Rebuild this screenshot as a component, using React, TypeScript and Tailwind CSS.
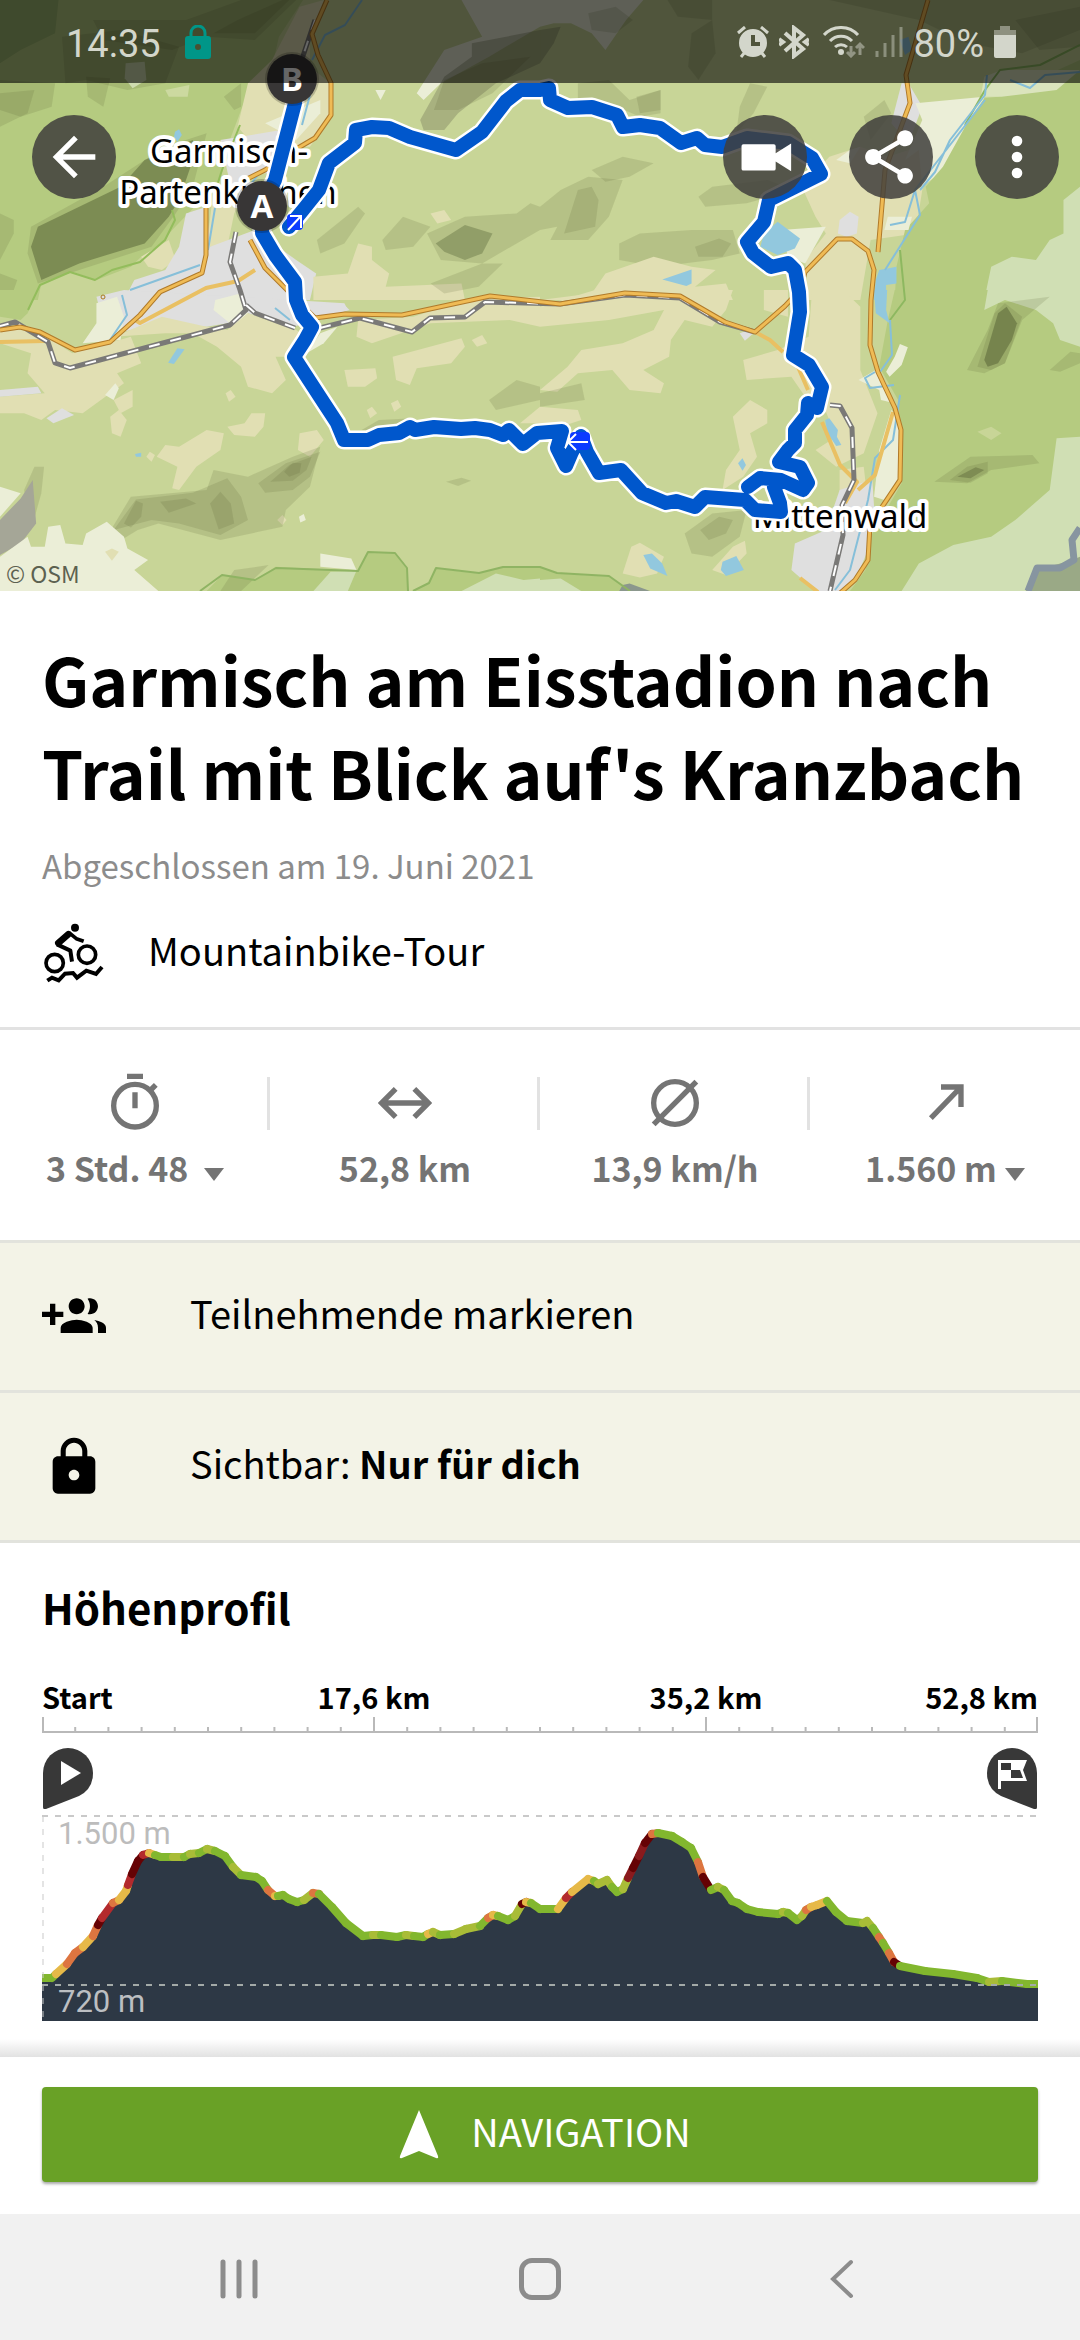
import React from "react";

const SANS = "font-['Noto_Sans_CJK_SC','Noto_Sans',sans-serif]";

type Shape = [fill: string, points: string];

const MEADOW = "#e1dfb3";
const FOREST = "#b5cb80";
const PALE = "#ebeed7";
const TOWN = "#dfdfdf";
const WATER = "#92c8de";
const SHADE = "rgba(84,96,52,0.16)";
const MOSS = "#d0dfb4";
const ROCK = "rgba(110,112,84,0.35)";

const NORTH_WEST: Shape[] = [
  [FOREST, "0,0 880,0 810,110 790,200 735,240 700,330 660,440 640,540 500,690 460,740 410,770 380,800 280,840 210,815 120,850 110,900 0,900"],
  ["#9fb970", "0,0 170,0 160,100 60,150 0,190"],
  [SHADE, "0,240 160,250 150,320 60,350 0,330"],
  [SHADE, "0,280 100,270 80,340 0,380"],
  [SHADE, "180,110 350,90 520,140 480,250 370,270 250,240 190,250"],
  [SHADE, "270,60 540,60 700,0 860,0 740,120 600,110 500,150 300,120"],
  [SHADE, "620,100 690,60 820,0 840,0 740,100"],
  [SHADE, "250,230 320,235 300,320 255,290"],
  [SHADE, "650,290 700,250 700,320 680,330"],
  ["rgba(84,96,52,0.5)", "110,680 350,560 420,480 560,420 560,480 520,600 490,650 420,730 230,790 120,840 90,740"],
  [SHADE, "90,680 300,560 480,440 600,400 560,560 510,640 440,740 230,810 110,850 80,760"],
  [SHADE, "0,640 40,660 40,700 0,780"],
  [SHADE, "0,820 50,840 30,900 0,900"],
  ["#cfdcb0", "365,190 420,185 425,240 385,265 362,235"],
  ["#ccd9a0", "480,270 550,255 545,290 490,290"],
  [MEADOW, "870,20 940,0 900,110 900,200 960,250 960,350 900,440 740,440 690,380 720,250 790,180"],
  [MEADOW, "410,770 490,720 510,780 470,810 430,800"],
  [MEADOW, "620,570 720,560 680,640 660,740 600,740"],
  [TOWN, "640,420 760,400 870,380 800,520 740,520 670,560"],
  [PALE, "770,370 930,300 930,340 860,420"],
  [TOWN, "540,640 600,620 610,740 740,690 860,780 918,820 900,900 360,900 390,840 480,810 520,740"],
  [MEADOW, "910,830 1010,820 1040,730 1080,740 1080,780 1130,820 1120,860 1340,850 1350,900 910,900"],
  [MEADOW, "1250,640 1290,630 1310,660 1270,670"],
  [PALE, "1090,270 1120,270 1105,300"],
  [PALE, "1210,280 1290,150 1400,110 1340,0 1568,0 1568,80 1420,170 1280,250 1230,300"],
  [ROCK, "1220,360 1290,230 1370,170 1370,130 1568,90 1568,190 1440,250 1330,340 1290,390 1230,390"],
  [SHADE, "1290,240 1400,190 1540,170 1430,280 1330,330 1260,330"],
  [SHADE, "920,720 1040,620 1060,640 1000,730 930,760"],
  [SHADE, "1110,720 1170,650 1250,680 1200,740 1120,750"],
  [SHADE, "1240,700 1350,650 1500,640 1540,610 1568,620 1568,690 1400,790 1280,780"],
  ["rgba(84,96,52,0.36)", "1265,730 1350,675 1430,700 1400,760 1350,780 1290,755"],
  [SHADE, "1250,850 1400,790 1460,790 1390,860 1290,880"],
  [WATER, "508,395 520,388 528,405 515,425 505,412"],
];

const NORTH_EAST: Shape[] = [
  [PALE, "0,0 300,0 250,60 190,150 150,100 90,70 40,70 0,80"],
  [ROCK, "0,90 60,80 40,130 0,190"],
  [SHADE, "140,40 220,20 270,60 220,100 150,90"],
  [SHADE, "370,0 500,0 500,60 400,50"],
  [SHADE, "440,100 500,60 510,160 460,240 430,200"],
  [SHADE, "110,250 200,240 260,300 350,270 350,340 290,350 200,310 110,300"],
  [SHADE, "280,290 350,270 350,330 290,340"],
  [SHADE, "580,320 610,250 660,260 620,340 570,400"],
  [SHADE, "840,0 1568,0 1568,90 1400,160 1240,130 1100,60"],
  [SHADE, "1380,60 1568,20 1568,140 1450,150"],
  [SHADE, "940,350 1000,300 1020,340 960,420"],
  [SHADE, "0,620 60,570 140,530 240,540 200,650 140,720 30,720 50,680 0,690"],
  [SHADE, "70,700 110,570 150,560 170,600 160,680"],
  [SHADE, "150,510 240,470 330,490 260,530 190,545"],
  [SHADE, "230,730 290,700 440,690 560,690 580,760 500,780 340,800 230,780"],
  [SHADE, "450,740 520,715 555,730 530,770 460,770"],
  [SHADE, "460,590 500,560 660,540 740,570 600,610 480,620"],
  [MEADOW, "760,560 840,470 930,440 1010,470 1130,430 1150,460 1110,570 1090,700 960,720 930,900 780,900 770,780 830,700 800,650"],
  [MEADOW, "0,900 150,880 190,820 330,770 440,800 510,810 450,860 540,850 560,900"],
  [TOWN, "1050,250 1070,250 1110,320 1070,430 1020,370"],
  [PALE, "1090,310 1290,290 1280,350 1160,520 1110,560 1100,450 1060,480 1110,360"],
  [PALE, "860,480 900,450 930,440 900,490"],
  [TOWN, "870,660 900,635 925,650 920,700 890,710 865,700"],
  [PALE, "700,690 830,680 770,790 720,770"],
  [FOREST, "1568,180 1568,900 1030,900 1035,800 1060,690 1130,610 1120,560 1170,500 1240,370 1290,295 1330,290"],
  [MOSS, "1568,560 1520,600 1520,700 1480,720 1440,780 1370,770 1310,800 1290,900 1568,900"],
  [PALE, "1010,650 1080,650 1070,690 1000,690"],
  ["#dbe4bd", "1290,230 1340,210 1568,210 1500,270 1340,290 1280,290"],
  [WATER, "690,665 755,715 740,745 690,765 640,740 650,700"],
  [WATER, "355,838 440,808 440,850 425,858"],
  [WATER, "1045,120 1070,110 1080,150 1060,165"],
  [WATER, "985,810 1035,800 1035,850 1005,855 1005,900 970,900 975,840"],
];

const SOUTH_WEST: Shape[] = [
  [TOWN, "280,20 360,0 1000,40 1010,60 930,90 850,110 720,70 660,100 600,110 480,100 420,110 340,130 290,60"],
  [FOREST, "0,0 110,0 80,70 60,90 0,80"],
  [PALE, "280,40 340,20 360,80 350,150 240,160 280,100"],
  [PALE, "625,30 700,10 720,70 680,110 620,60"],
  [MEADOW, "0,110 120,130 210,190 380,140 410,220 340,250 360,280 240,370 160,360 120,390 70,370 0,370 0,320 130,310 80,250 90,190 0,160"],
  [MEADOW, "330,140 470,80 600,110 660,120 720,70 860,120 890,140 850,200 800,200 830,270 790,310 720,290 700,230 630,170 560,130 480,130"],
  [TOWN, "0,300 110,290 120,310 0,320"],
  [TOWN, "135,385 180,355 215,375 155,400"],
  [TOWN, "930,40 1000,45 1015,60 940,80"],
  [PALE, "930,130 980,110 940,160 890,190"],
  [PALE, "305,315 335,280 345,295 330,330"],
  [MEADOW, "330,330 385,300 385,350 350,370"],
  [MEADOW, "320,380 345,360 368,390 350,440 325,430"],
  [MEADOW, "655,310 670,300 684,320 665,335"],
  [MEADOW, "660,410 710,400 730,370 770,370 765,410 740,440 680,435"],
  [MEADOW, "455,500 480,465 520,470 600,420 650,430 640,480 570,530 520,600 500,595 515,530"],
  [MEADOW, "425,500 435,485 450,495 440,515"],
  [MEADOW, "870,430 920,420 940,450 900,500 865,480"],
  [MEADOW, "1140,200 1340,145 1350,170 1310,220 1210,235 1190,285 1150,270"],
  [MEADOW, "1000,240 1090,235 1095,265 1060,290 1010,290"],
  [MEADOW, "1040,90 1200,80 1350,30 1568,20 1568,110 1480,90 1250,100 1080,160 1035,140"],
  [MEADOW, "1370,150 1400,135 1415,160 1385,170"],
  [MEADOW, "1065,360 1080,350 1095,370 1075,385"],
  [MEADOW, "1135,340 1155,330 1165,350 1145,365"],
  [MEADOW, "1510,400 1568,350 1568,400"],
  [MEADOW, "805,690 820,675 832,690 820,705"],
  [PALE, "868,680 882,672 888,690 872,697"],
  [SHADE, "1420,330 1500,270 1568,290 1568,330 1440,360"],
  [SHADE, "1050,420 1100,390 1200,385 1150,420"],
  [SHADE, "1295,575 1340,563 1368,572 1330,588"],
  [SHADE, "310,740 380,620 600,600 620,540 720,560 850,500 930,470 900,590 830,660 820,710 640,750 460,700 400,720 320,770"],
  [SHADE, "330,720 395,628 560,608 660,565 700,620 720,690 640,735 520,700 440,690"],
  [SHADE, "360,700 395,632 415,640 410,680 380,712"],
  [SHADE, "465,635 540,625 570,640 490,668"],
  [SHADE, "610,640 640,605 670,640 680,700 635,718"],
  [SHADE, "750,580 830,520 930,485 900,560 850,600 770,608"],
  [SHADE, "785,575 840,525 905,500 890,540 850,572"],
  [SHADE, "825,545 850,518 875,520 870,548 840,560"],
  [SHADE, "70,600 100,530 128,530 120,610 90,720"],
  [PALE, "0,590 60,610 0,680"],
  ["#a5a697", "0,690 60,625 95,570 105,700 60,760 0,795"],
  [PALE, "0,800 80,740 90,770 130,770 140,710 175,705 190,760 240,765 250,730 310,695 360,740 370,775 430,810 390,840 460,903 0,903"],
  [MEADOW, "305,785 325,775 345,785 325,812"],
  [FOREST, "600,903 645,855 740,870 800,830 1040,842 1070,785 1145,788 1180,835 1185,903"],
  [FOREST, "1200,903 1245,880 1265,835 1390,850 1460,830 1568,830 1568,903"],
  [SHADE, "640,903 680,840 780,825 700,903"],
  [MOSS, "910,903 960,845 1035,842 1010,903"],
  [MOSS, "1340,903 1440,850 1520,870 1568,865 1568,903"],
  [PALE, "930,790 1020,805 1035,840 930,830"],
  [WATER, "488,218 515,175 536,178 505,222"],
  [WATER, "392,492 410,488 410,500 395,500"],
];

const SOUTH_EAST: Shape[] = [
  [MEADOW, "0,50 160,0 560,0 540,60 500,110 420,90 380,150 375,200 300,240 360,280 350,310 260,300 210,240 110,250 50,305 0,300 80,230 120,180 240,160 330,120 360,60 200,90 0,110"],
  [MEADOW, "650,0 720,0 720,80 650,60"],
  [MEADOW, "790,0 880,0 930,50 930,240 980,370 940,490 860,530 800,480 860,440 820,340 770,320 730,260 600,270 590,210 690,180 780,140"],
  [MEADOW, "560,380 610,330 660,360 660,400 610,430 630,500 590,560 530,600 540,540 580,480"],
  [MEADOW, "0,350 110,360 120,390 60,410 0,400"],
  [MEADOW, "240,850 265,770 290,758 360,800 340,850 290,862"],
  [MEADOW, "500,840 560,770 595,752 600,790 540,855"],
  [MEADOW, "870,540 940,530 950,620 870,640"],
  [TOWN, "580,130 600,122 620,130 595,152"],
  [TOWN, "870,600 930,580 965,570 970,650 960,760 920,860 870,903 800,903 730,840 740,760 830,720"],
  [PALE, "985,480 1020,360 1045,390 1045,580 1000,630 970,620"],
  [PALE, "925,270 975,240 1000,270 1030,340 990,330 985,300"],
  [FOREST, "1568,0 1030,0 1010,90 985,230 1040,330 1050,580 960,740 945,840 900,903 1568,903"],
  [MOSS, "1300,0 1568,0 1568,170 1510,150 1490,100 1440,60 1350,30 1290,60"],
  [MOSS, "1568,440 1500,445 1480,600 1380,690 1310,740 1200,765 1100,820 1050,903 1568,903"],
  ["#9aa986", "1568,800 1540,812 1440,840 1410,903 1568,903"],
  [PALE, "1030,200 1045,162 1068,172 1050,225 1015,260 1005,245"],
  [SHADE, "1240,240 1300,120 1330,40 1480,20 1400,90 1350,220 1290,250"],
  ["rgba(84,96,52,0.5)", "1290,210 1330,70 1355,50 1385,100 1370,150 1330,220 1300,230"],
  [SHADE, "1270,230 1320,70 1350,40 1400,80 1350,220 1310,240"],
  [SHADE, "1480,240 1540,185 1568,190 1568,220 1510,245"],
  [SHADE, "1145,575 1250,500 1430,495 1450,520 1310,540 1240,580"],
  [SHADE, "1190,570 1240,530 1300,515 1300,550 1250,578"],
  ["rgba(84,96,52,0.4)", "1212,560 1265,532 1290,540 1250,565"],
  ["#c8d597", "1270,425 1310,410 1340,430 1310,450"],
  [SHADE, "420,730 500,670 600,660 580,740 500,800 440,790"],
  [SHADE, "465,720 520,680 560,690 540,730 490,750"],
  [SHADE, "0,310 120,280 130,330 0,350"],
  [FOREST, "0,830 50,850 200,860 260,903 0,903"],
  [MOSS, "0,870 60,865 120,903 0,903"],
  ["#8b978d", "230,903 240,885 260,880 320,903"],
  [WATER, "970,0 1008,0 1005,60 1015,100 975,70"],
  [WATER, "300,795 325,790 355,820 370,858 320,835"],
  [WATER, "530,815 570,798 592,840 540,858 525,840"],
  [WATER, "575,520 588,505 598,525 588,542"],
  [WATER, "828,390 840,385 865,420 862,440 875,465 860,468 835,430"],
];

const TILES: { at: string; shapes: Shape[] }[] = [
  { at: "translate(0 0)", shapes: NORTH_WEST },
  { at: "translate(540 0)", shapes: NORTH_EAST },
  { at: "translate(0 290)", shapes: SOUTH_WEST },
  { at: "translate(540 290)", shapes: SOUTH_EAST },
];

const ROADS = [
  "M327 0 312 34 318 55 331 83 331 115 315 138 298 148 265 170 245 180",
  "M206 208V255L202 273 160 292 140 315 110 342 75 350 40 332 20 327 0 330",
  "M250 240 265 268 285 288 315 318 345 314 402 315 490 296 560 304 625 293 680 296 725 322 755 332 785 306 800 290 805 272 837 239 852 239 868 251 874 270 871 300 870 345 878 372 895 408 901 430 900 480 870 525 868 560 855 580 838 595",
  "M928 0 906 75 910 103 885 170 878 252",
];
const TRACKS = "M0 342 45 341M135 320 140 323 206 288 238 281 255 270M755 332 770 340 783 352M795 360 808 390M822 422 840 465 857 482 845 503M893 412 875 475 858 490M800 578 818 592";
const RAILWAY = "M315 20 300 65M236 232 230 262 240 290 246 310 230 325 70 368 55 363 48 342 15 322 0 326M246 305 255 313 295 328M320 328 360 318 412 332 430 318 465 317 485 302 560 304 625 295 680 298 720 322 755 332M830 405 840 406 852 428 854 480 842 505 843 535 830 591";
const STREAMS = "M362 0 345 25 325 35 312 60M310 95 302 125M215 208 208 250M200 265 130 290M122 295 127 315 110 340M262 170 250 185M987 75 985 95 950 140 935 172 920 190M985 100 950 145 915 190 905 222 890 225M915 190 920 215 885 270M894 385 870 388 865 378 875 372M900 395 893 440 875 458 868 500 850 570 835 590M890 320 892 355 880 372M1010 80 1030 88 1045 75 1080 72M275 308 290 320";

const ROUTE =
  "M292 79 295 103 275 180 262 206 262 233 275 255 295 282 296 300 302 315 312 327 305 340 294 357 320 397 337 423 344 440 368 440 379 435 399 433 410 427 415 430 434 427 461 429 475 428 490 430 503 435 509 430 523 444 537 433 562 431 557 448 566 466 572 452 581 436 587 452 599 473 621 470 642 493 666 503 676 501 695 507 705 497 745 500 755 510 781 512 780 503 774 487 781 482M748 487 760 478 781 480 803 490 808 483 800 467 779 462 788 450 795 443 795 430 807 415 808 403 817 408 822 387 809 365 793 355 800 312 799 292 795 270 788 263 771 267 753 253 747 242 764 222 769 200 795 187 821 174 812 158 788 143 764 140 747 138 722 147 705 145 697 138 681 143 660 128 640 125 623 127 617 115 592 107 568 108 550 100 549 88 540 90 520 90 506 101 482 132 456 150 410 137 389 128 372 127 356 130 355 143 329 163 319 190 303 210 289 227";

function PlaceLabel({ x, y, children }: { x: number; y: number; children: string }) {
  return (
    <text
      x={x}
      y={y}
      textAnchor="middle"
      className="fill-black stroke-white font-['Noto_Sans',sans-serif] text-[33px] [paint-order:stroke]"
      strokeWidth="8"
      strokeLinejoin="round"
    >
      {children}
    </text>
  );
}

function Waypoint({ x, y, children }: { x: number; y: number; children: string }) {
  return (
    <g>
      <circle cx={x} cy={y} r="27" fill="rgba(0,0,0,0.2)" />
      <circle cx={x} cy={y} r="25" fill="#383636" />
      <text x={x} y={y + 12} textAnchor="middle" className="fill-white font-['Noto_Sans',sans-serif] text-[33px] font-bold">
        {children}
      </text>
    </g>
  );
}

function TourMap() {
  return (
    <svg className="absolute inset-0 size-full" viewBox="0 0 1080 591" preserveAspectRatio="xMidYMin slice" role="img" aria-label="Karte der Tour">
      <rect width="1080" height="591" fill="#c8d597" />
      {TILES.map((tile) => (
        <g key={tile.at} transform={tile.at}>
          <g transform="scale(0.3444 0.3334)">
            {tile.shapes.map(([fill, points], i) => (
              <polygon key={i} points={points} fill={fill} />
            ))}
          </g>
        </g>
      ))}
      <g fill="none" strokeLinejoin="round">
        <path d="M240 125 222 170 214 195 M172 210 175 220 165 240 140 262 112 270 95 280 70 272 40 285 28 310" stroke="#93bd5c" strokeWidth="2" />
        <path d="M200 591 222 575 255 580 276 568 358 571 368 552 395 553 407 568 408 591 M413 591 429 583 436 568 479 573 503 567 540 567 557 573 609 576 630 591" stroke="#8fb463" strokeWidth="2" />
        <path d="M1080 45 1040 65 1000 70 985 90 965 125M890 320 905 300 900 250" stroke="#8db860" strokeWidth="2" />
        <path d="M1080 528 1072 540 1074 560 1060 568 1037 568 1028 591" stroke="#8795a0" strokeWidth="7" />
        <path d={STREAMS} stroke="#86bfd9" strokeWidth="2" />
        <path d={TRACKS} stroke="#e9c063" strokeWidth="4" />
        <path d={RAILWAY} stroke="#7a7977" strokeWidth="5" />
        <path d={RAILWAY} stroke="#fff" strokeWidth="2" strokeDasharray="11 11" />
        {ROADS.map((d) => (
          <g key={d}>
            <path d={d} stroke="#b07a2a" strokeWidth="5" />
            <path d={d} stroke="#efbb55" strokeWidth="3" />
          </g>
        ))}
        <circle cx="103" cy="297" r="2" stroke="#a8781f" />
      </g>
      <PlaceLabel x={229} y={163}>Garmisch-</PlaceLabel>
      <PlaceLabel x={228} y={204}>Partenkirchen</PlaceLabel>
      <PlaceLabel x={840} y={528}>Mittenwald</PlaceLabel>
      <g fill="none" strokeLinejoin="round" strokeLinecap="round">
        <path d={ROUTE} stroke="#fff" strokeWidth="19" />
        <path d={ROUTE} stroke="#0057cc" strokeWidth="14" />
      </g>
      <g fill="none" stroke="#fff" strokeWidth="2">
        <rect x="287" y="214" width="16" height="16" rx="4" fill="#0b3bff" stroke="none" />
        <path d="M288 230 301 216M290 216H301V228" />
        <rect x="570" y="432" width="20" height="18" rx="4" fill="#0b3bff" stroke="none" />
        <path d="M588 442H568M576 434 568 442 576 450" />
      </g>
      <Waypoint x={292} y={79}>B</Waypoint>
      <Waypoint x={262} y={206}>A</Waypoint>
    </svg>
  );
}

function StatusBar() {
  return (
    <div className="relative flex h-[83px] items-center justify-between bg-black/60 pr-16 pl-[66px] font-[Roboto,sans-serif] text-[#d3d6cb]">
      <div className="flex items-center gap-6">
        <span className="pt-1 text-[38px] leading-[48px]">14:35</span>
        <svg className="h-[34px] w-[26px]" viewBox="0 0 26 34" aria-hidden="true">
          <path d="M6 13V8a7 7 0 0 1 14 0v5" fill="none" stroke="#009688" strokeWidth="3" />
          <path fillRule="evenodd" fill="#009688" d="M3 11H23a3 3 0 0 1 3 3V31a3 3 0 0 1-3 3H3a3 3 0 0 1-3-3V14a3 3 0 0 1 3-3ZM13 19a3 3 0 1 0 0 6 3 3 0 0 0 0-6Z" />
        </svg>
      </div>
      <div className="flex items-center gap-[10px]">
        <svg className="h-8 w-8" viewBox="0 0 32 32" aria-hidden="true">
          <path fillRule="evenodd" fill="currentColor" d="M16 3a14 14 0 1 1 0 28 14 14 0 0 1 0-28ZM14 9V20H23V16H18V9Z" />
          <path d="M1 7 8 1M31 7 24 1M4 31 8 26M28 31 24 26" stroke="currentColor" strokeWidth="3" />
        </svg>
        <svg className="h-[34px] w-[30px]" viewBox="0 0 30 34" fill="none" stroke="currentColor" strokeWidth="4" aria-hidden="true">
          <path d="M6 8 24 24 15 31V3L24 10 6 26M0 14 4 17 0 20M30 14 26 17 30 20" />
        </svg>
        <svg className="ml-1 h-8 w-[42px]" viewBox="0 0 42 32" fill="none" stroke="currentColor" strokeWidth="3" aria-hidden="true">
          <path d="M1 9a23 23 0 0 1 34 0M7 15a15 15 0 0 1 22 0M12 21a9 9 0 0 1 12 0" />
          <circle cx="18" cy="26" r="3" fill="currentColor" stroke="none" />
          <path opacity="0.5" d="M28 20V30M24 26 28 30 32 26M37 29V18M33 22 37 18 41 22" />
        </svg>
        <svg className="h-[30px] w-7" viewBox="0 0 28 30" stroke="currentColor" strokeWidth="3" opacity="0.45" aria-hidden="true">
          <path d="M2 24V30M10 16V30M18 8V30M26 0V30" />
        </svg>
        <span className="pt-1 text-[38px] leading-[48px]">80%</span>
        <svg className="h-8 w-[22px]" viewBox="0 0 22 32" aria-hidden="true">
          <path fill="currentColor" opacity="0.5" d="M6 0H16V4H22V9H0V4H6Z" />
          <path fill="currentColor" d="M0 9H22V30a2 2 0 0 1-2 2H2a2 2 0 0 1-2-2Z" />
        </svg>
      </div>
    </div>
  );
}

function MapButton({ label, children }: { label: string; children: React.ReactNode }) {
  return (
    <button type="button" aria-label={label} className="flex size-[84px] items-center justify-center rounded-full bg-[#403e3c]/85 text-white">
      <svg className="size-16" viewBox="0 0 24 24" fill="currentColor" aria-hidden="true">
        {children}
      </svg>
    </button>
  );
}

function MapHeader() {
  return (
    <header className="relative h-[591px] overflow-hidden">
      <TourMap />
      <StatusBar />
      <div className="relative mt-8 flex justify-between pr-[21px] pl-8">
        <MapButton label="Zurück">
          <path d="M20 11H7.83l5.59-5.59L12 4l-8 8 8 8 1.41-1.41L7.83 13H20v-2z" />
        </MapButton>
        <div className="flex gap-[42px]">
          <MapButton label="Video">
            <path d="M3.900 7.200H15.300q.7 0 .7.7v2.700L21.800 6.900v10.400l-5.800-3.600v2.700q0 .7-.7.7H3.900q-.7 0-.7-.7V7.900q0-.7.7-.7z" />
          </MapButton>
          <MapButton label="Teilen">
            <path transform="translate(-0.7 0)" d="M18 16.080c-.76 0-1.440.3-1.960.77L8.910 12.700c.05-.23.090-.46.090-.7s-.04-.47-.09-.7l7.050-4.110c.54.5 1.250.81 2.040.81 1.660 0 3-1.340 3-3s-1.340-3-3-3-3 1.340-3 3c0 .24.040.47.090.7L8.040 9.810C7.500 9.310 6.790 9 6 9c-1.660 0-3 1.340-3 3s1.340 3 3 3c.79 0 1.500-.31 2.040-.81l7.120 4.160c-.05.21-.08.43-.08.65 0 1.610 1.310 2.920 2.920 2.920s2.920-1.310 2.920-2.920-1.310-2.920-2.920-2.920z" />
          </MapButton>
          <MapButton label="Mehr">
            <circle cx="12" cy="6" r="2" />
            <circle cx="12" cy="12" r="2" />
            <circle cx="12" cy="18" r="2" />
          </MapButton>
        </div>
      </div>
      <a href="#osm" className={`absolute bottom-1 left-[6px] text-[23px] leading-[28px] text-[#5c6150] ${SANS}`}>
        © OSM
      </a>
    </header>
  );
}

function MountainBikeIcon() {
  return (
    <svg className="size-16" viewBox="18 24 192 192" fill="none" stroke="#000" aria-hidden="true">
      <circle cx="117" cy="41" r="12" fill="#000" stroke="none" />
      <circle cx="56" cy="147" r="26" strokeWidth="11" />
      <circle cx="153" cy="122" r="26" strokeWidth="11" />
      <path d="M97 61 67 87" strokeWidth="20" strokeLinecap="round" />
      <path d="M99 56 121 74 143 82" strokeWidth="11" strokeLinejoin="round" />
      <path d="M63 91 103 110 108 143" strokeWidth="12" strokeLinejoin="round" />
      <path d="M34 200 48 191 68 199 87 179 111 177 123 191 151 170 180 180 198 159" strokeWidth="12" />
    </svg>
  );
}

function Stat({ icon, label, value, menu = false, divided = true }: { icon: React.ReactNode; label: string; value: string; menu?: boolean; divided?: boolean }) {
  const row = "mt-[9px] flex items-center justify-center gap-2 whitespace-pre text-[34px] leading-[48px] font-bold";
  return (
    <li className="relative flex flex-col items-center">
      <svg className="size-16" viewBox="0 0 24 24" fill="none" stroke="currentColor" strokeWidth="2" role="img" aria-label={label}>
        {icon}
      </svg>
      {menu ? (
        <button type="button" className={row}>
          {value}
          <svg className="mt-3 h-[13px] w-5" viewBox="0 0 20 13" fill="currentColor" aria-hidden="true">
            <path d="M0 0H20L10 13Z" />
          </svg>
        </button>
      ) : (
        <span className={row}>{value}</span>
      )}
      {divided && <span className="absolute top-[6px] right-0 h-[53px] w-[3px] bg-[#e2e2e2]" />}
    </li>
  );
}

function OptionRow({ icon, children }: { icon: string; children: React.ReactNode }) {
  return (
    <button type="button" className="flex h-[150px] w-full items-center gap-[84px] border-b-[3px] border-[#e2e3dd] bg-[#f3f3e7] px-[42px] text-left text-[38px] leading-[54px]">
      <svg className="size-16" viewBox="0 0 24 24" aria-hidden="true">
        <path d={icon} />
      </svg>
      <span className="pb-2">{children}</span>
    </button>
  );
}

const GREEN = "#82b72e";
const LIME = "#a9bc37";
const YELLOW = "#e6b948";
const ORANGE = "#dd7540";
const RED = "#b32a2d";
const WINE = "#8a1a1d";
const MAROON = "#650204";

/* Elevation samples: x, y and the slope colour of the stretch that follows. */
const PROFILE: [number, number, string][] = [
  [0, 163, GREEN], [10, 163, GREEN], [14, 159, YELLOW], [25, 149, ORANGE], [33, 138, ORANGE], [41, 132, YELLOW], [51, 121, ORANGE],
  [56, 110, MAROON], [60, 103, RED], [71, 88, ORANGE], [77, 85, YELLOW], [84, 76, YELLOW], [86, 70, RED], [90, 59, MAROON],
  [96, 46, MAROON], [101, 40, RED], [107, 38, YELLOW], [113, 40, GREEN], [119, 42, GREEN], [131, 42, LIME], [142, 42, GREEN],
  [148, 39, LIME], [157, 38, GREEN], [165, 34, LIME], [173, 36, GREEN], [183, 41, GREEN], [191, 52, LIME], [199, 60, GREEN],
  [214, 62, GREEN], [220, 66, GREEN], [226, 75, ORANGE], [233, 81, YELLOW], [236, 81, GREEN], [241, 80, GREEN], [247, 84, GREEN],
  [255, 87, GREEN], [262, 85, LIME], [271, 78, ORANGE], [277, 79, GREEN], [290, 92, GREEN], [304, 108, GREEN], [321, 121, GREEN],
  [331, 120, LIME], [339, 120, GREEN], [355, 122, GREEN], [364, 120, LIME], [372, 121, GREEN], [381, 122, GREEN], [386, 119, YELLOW],
  [391, 117, LIME], [398, 120, GREEN], [412, 119, LIME], [424, 114, LIME], [438, 111, GREEN], [446, 103, ORANGE], [451, 100, YELLOW],
  [456, 101, GREEN], [466, 105, GREEN], [473, 101, LIME], [480, 89, MAROON], [484, 87, YELLOW], [489, 88, GREEN], [498, 94, GREEN],
  [516, 94, YELLOW], [524, 83, RED], [530, 77, YELLOW], [546, 64, YELLOW], [552, 66, GREEN], [556, 69, LIME], [565, 65, LIME],
  [570, 72, GREEN], [575, 77, GREEN], [581, 74, LIME], [586, 63, WINE], [591, 53, MAROON], [597, 41, WINE], [603, 28, MAROON],
  [610, 19, ORANGE], [616, 18, GREEN], [630, 21, GREEN], [640, 27, GREEN], [649, 33, GREEN], [656, 47, ORANGE], [661, 62, MAROON],
  [669, 75, GREEN], [676, 72, LIME], [682, 75, GREEN], [690, 86, GREEN], [696, 88, GREEN], [705, 94, GREEN], [716, 97, GREEN],
  [736, 99, GREEN], [741, 97, LIME], [746, 98, GREEN], [755, 105, GREEN], [760, 101, LIME], [764, 95, ORANGE], [769, 92, YELLOW],
  [775, 90, YELLOW], [785, 86, GREEN], [794, 97, GREEN], [805, 106, GREEN], [821, 108, LIME], [825, 106, LIME], [831, 113, GREEN],
  [837, 122, ORANGE], [841, 128, GREEN], [847, 138, ORANGE], [852, 147, MAROON], [858, 151, GREEN], [883, 156, GREEN], [911, 159, GREEN],
  [935, 163, GREEN], [947, 167, LIME], [960, 166, GREEN], [985, 169, GREEN], [996, 169, GREEN],
];

function ElevationChart() {
  const outline = "M" + PROFILE.map(([x, y]) => `${x} ${y}`).join("L") + "V206H0Z";
  return (
    <div className="relative">
      <svg className="block h-[206px] w-full" viewBox="0 0 996 206" preserveAspectRatio="none" role="img" aria-label="Höhenprofil der Tour">
        <path d={outline} fill="#2d3845" />
        {PROFILE.slice(0, -1).map(([x, y, color], i) => {
          const [nx, ny] = PROFILE[i + 1];
          return <line key={x} x1={x} y1={y} x2={nx} y2={ny} stroke={color} strokeWidth="8" strokeLinecap={i === 0 ? "butt" : "round"} />;
        })}
        <path d="M0 1H996" stroke="#c9c9c9" strokeWidth="2" strokeDasharray="6 7" />
        <path d="M1 1V206" stroke="#c9c9c9" strokeDasharray="6 7" />
        <path d="M0 170H996" stroke="#a3aaa8" strokeWidth="2" strokeDasharray="6 7" />
      </svg>
      <span className="absolute top-0 left-4 font-[Roboto,sans-serif] text-[31px] leading-[38px] text-[#bcbcbc]">1.500 m</span>
      <span className="absolute bottom-0 left-4 font-[Roboto,sans-serif] text-[31px] leading-[38px] text-[#bcbfc2]">720 m</span>
    </div>
  );
}

function AxisRuler() {
  return (
    <svg className="block h-4 w-full" viewBox="0 0 996 16" preserveAspectRatio="none" stroke="#b9b9b9" strokeWidth="2" aria-hidden="true">
      <path d="M0 15H996" />
      {Array.from({ length: 31 }, (_, i) => {
        const x = Math.min(Math.max(i * 33.2, 1), 995);
        return <line key={i} x1={x} x2={x} y1={i % 10 === 0 ? 0 : 10} y2="15" />;
      })}
    </svg>
  );
}

export default function App() {
  return (
    <div className={`flex min-h-screen flex-col bg-white text-black ${SANS}`}>
      <MapHeader />

      <main className="grow">
        <section className="border-b-[3px] border-[#e2e2e2] px-[42px] pt-[41px] pb-[41px]">
          <h1 className="text-[66px] leading-[93px] font-bold">Garmisch am Eisstadion nach Trail mit Blick auf's Kranzbach</h1>
          <p className="mt-[23px] text-[33px] leading-[48px] text-[#8c8c8c]">Abgeschlossen am 19. Juni 2021</p>
          <div className="mt-[33px] flex items-center gap-[42px]">
            <MountainBikeIcon />
            <span className="pb-2 text-[38px] leading-[54px]">Mountainbike-Tour</span>
          </div>
        </section>

        <ul className="grid grid-cols-4 border-b-[3px] border-[#e2e3dd] pt-[41px] pb-12 text-[#747474]">
          <Stat
            label="Dauer"
            value="3 Std. 48 "
            menu
            icon={
              <>
                <circle cx="12" cy="13" r="8" />
                <path d="M9 2H15M12 8V14M17.500 7.500 19.800 5.200" />
              </>
            }
          />
          <Stat label="Strecke" value="52,8 km" icon={<path d="M3.500 12H20.500M8.500 6.700 3.200 12 8.500 17.300M15.500 6.700 20.800 12 15.500 17.300" />} />
          <Stat
            label="Durchschnitt"
            value="13,9 km/h"
            icon={
              <>
                <circle cx="12" cy="12" r="8" />
                <path d="M4 20 20 4" />
              </>
            }
          />
          <Stat label="Bergauf" value="1.560 m" menu divided={false} icon={<path d="M6.700 17.700 18 6M10.500 6H18V13.500" />} />
        </ul>

        <OptionRow icon="M8 10H5V7H3v3H0v2h3v3h2v-3h3v-2zm10 1c1.660 0 2.990-1.340 2.990-3S19.660 5 18 5c-.32 0-.63.050-.91.140.57.810.9 1.790.9 2.860s-.34 2.040-.9 2.860c.28.090.59.140.91.140zm-5 0c1.660 0 2.990-1.340 2.990-3S14.660 5 13 5c-1.660 0-3 1.340-3 3s1.340 3 3 3zm6.620 2.160c.83.73 1.380 1.660 1.380 2.840v2h3v-2c0-1.540-2.370-2.490-4.380-2.840zM13 13c-2 0-6 1-6 3v2h12v-2c0-2-4-3-6-3z">
          Teilnehmende markieren
        </OptionRow>
        <OptionRow icon="M18 8h-1V6c0-2.760-2.240-5-5-5S7 3.240 7 6v2H6c-1.100 0-2 .9-2 2v10c0 1.100.9 2 2 2h12c1.100 0 2-.9 2-2V10c0-1.100-.9-2-2-2zm-6 9c-1.100 0-2-.9-2-2s.9-2 2-2 2 .9 2 2-.9 2-2 2zm3.100-9H8.900V6c0-1.710 1.390-3.100 3.100-3.100s3.100 1.390 3.100 3.100v2z">
          Sichtbar: <b>Nur für dich</b>
        </OptionRow>

        <section className="px-[42px] pt-[34px]">
          <h2 className="text-[42px] leading-[60px] font-bold">Höhenprofil</h2>
          <div className="mt-[38px] grid grid-cols-6 text-[29px] leading-[42px] font-bold">
            <span>Start</span>
            <span className="col-span-2 text-center">17,6 km</span>
            <span className="col-span-2 text-center">35,2 km</span>
            <span className="text-right whitespace-nowrap">52,8 km</span>
          </div>
          <AxisRuler />
          <div className="flex justify-between pt-[14px] pb-[6px]">
            <svg className="h-[62px] w-[52px]" viewBox="0 0 52 62" role="img" aria-label="Start">
              <path d="M1 26a25 25 0 0 1 50 0q0 16-14 23L4 62Q1 63 1 60Z" fill="#383838" />
              <path d="M19 14 39 26 19 38Z" fill="#fff" />
            </svg>
            <svg className="h-[62px] w-[52px]" viewBox="0 0 52 62" role="img" aria-label="Ziel">
              <path d="M51 26a25 25 0 0 0-50 0q0 16 14 23L48 62Q51 63 51 60Z" fill="#383838" />
              <path fillRule="evenodd" fill="#fff" d="M12 13H41L37 23 41 34H15V42H12ZM15 16V23H25V16ZM25 23V31H37L34 23Z" />
            </svg>
          </div>
          <ElevationChart />
        </section>
      </main>

      <footer>
        <div className="mt-4 h-[18px] bg-linear-to-b from-white to-[#e2e2e2]" />
        <div className="px-[42px] pt-[30px] pb-8">
          <button type="button" className="flex h-[95px] w-full items-center justify-center gap-8 rounded-[4px] bg-[#69a126] pl-[10px] text-[38px] leading-[54px] text-white shadow-[0_2px_3px_rgba(0,0,0,0.35)]">
            <svg className="h-[49px] w-10" viewBox="0 0 40 49" fill="currentColor" aria-hidden="true">
              <path d="M20 0 39 46Q40 49 37 48L20 41 3 48Q0 49 1 46Z" />
            </svg>
            <span className="pb-2">NAVIGATION</span>
          </button>
        </div>
        <nav className="grid h-[126px] grid-cols-[477px_1fr_477px] bg-[#f1f1f1] text-[#8c8c8c]">
          <button type="button" aria-label="Letzte Apps" className="flex items-center justify-center pt-1">
            <svg className="h-10 w-[38px]" viewBox="0 0 38 40" stroke="currentColor" strokeWidth="5" strokeLinecap="round" aria-hidden="true">
              <path d="M3 3V37M19 3V37M35 3V37" />
            </svg>
          </button>
          <button type="button" aria-label="Startbildschirm" className="flex items-center justify-center pt-1">
            <span className="size-[42px] rounded-[13px] border-[5px] border-current" />
          </button>
          <button type="button" aria-label="Zurück" className="flex items-center justify-center pt-1">
            <svg className="h-10 w-6" viewBox="0 0 24 40" fill="none" stroke="currentColor" strokeWidth="4" strokeLinecap="round" aria-hidden="true">
              <path d="M21 3 3 20 21 37" />
            </svg>
          </button>
        </nav>
      </footer>
    </div>
  );
}
